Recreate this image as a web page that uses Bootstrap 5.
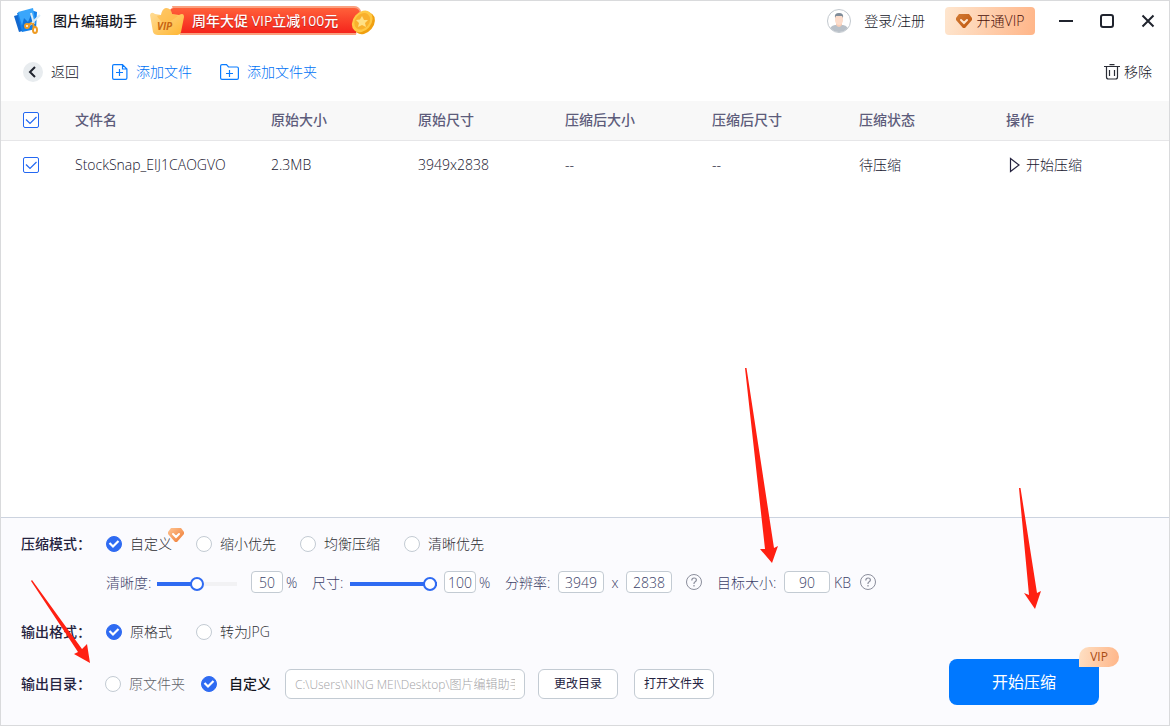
<!DOCTYPE html>
<html lang="zh-CN">
<head>
<meta charset="utf-8">
<meta name="viewport" content="width=device-width, initial-scale=1">
<title>图片编辑助手</title>
<link href="https://cdn.jsdelivr.net/npm/bootstrap@5.3.0/dist/css/bootstrap.min.css" rel="stylesheet">
<style>
  body { font: 300 14px/20px "Open Sans", "Noto Sans CJK SC", sans-serif; color: #14161f; }
  .app { min-height: 100vh; border: 1px solid #d9dadc; background: #fff; }
  .app svg { display: block; flex: none; }
  .app button, .app input { font-weight: inherit; }
  .plain { background: none; border: 0; padding: 0; color: inherit; display: flex; align-items: center; text-decoration: none; }
  .blue { color: #0072f5; }

  .titlebar { height: 40px; padding: 0 14px 0 12px; }
  .appname { font-weight: 500; margin: 0 13px 0 12px; }
  .promo { width: 225px; height: 30px; position: relative; }
  .promo span { position: absolute; left: 42px; top: 5px; color: #fff; font-weight: 500; text-shadow: 0 1px 1px #b8201a; white-space: nowrap; }
  .login { gap: 13px; margin-right: 20px; }
  .openvip { width: 90px; height: 28px; border-radius: 4px; background: linear-gradient(100deg, #fee6cf, #ffb588); color: #4b0f08; gap: 5px; justify-content: center; margin-right: 24px; }
  .wins { gap: 27px; }

  .toolbar { height: 60px; padding: 2px 17px 0 22px; }
  .backdot { width: 20px; height: 20px; border-radius: 50%; background: #e8ecef; margin-right: 8px; display: grid; place-items: center; }
  .tools { gap: 28px; margin-left: 33px; }

  .files { table-layout: fixed; width: 100%; }
  .files th { height: 39px; background: #f8f8f8; color: #5d5c7b; font-weight: 500; padding: 0; border-bottom: 1px solid #e6e6e8; }
  .files td { height: 49px; padding: 0; color: #16142e; }
  .files .form-check-input { display: block; width: 16px; height: 16px; margin: 0 0 0 22px; border: 1px solid #2468f2; border-radius: 2px; background-color: #fff; }
  .files .form-check-input:checked { background-size: 16px 16px; background-image: url("data:image/svg+xml,%3Csvg xmlns='http://www.w3.org/2000/svg' viewBox='0 0 16 16'%3E%3Cpath d='M3 7.5l4 4L13.500 5' fill='none' stroke='%232468f2' stroke-width='1.200'/%3E%3C/svg%3E"); }

  .panel { position: relative; border-top: 1px solid #ccd3df; background: #fbfbfe; padding: 14px 70px 20px 20px; }
  .rowhead { width: 85px; font-weight: 500; color: #25233f; white-space: nowrap; }
  .opts { height: 24px; gap: 24px; color: #2d2e33; }
  .pick { display: flex; align-items: center; gap: 8px; white-space: nowrap; position: relative; }
  .pick .form-check-input { width: 16px; height: 16px; margin: 0; border: 1px solid #c3cbd3; background-color: #fff; flex: none; }
  .pick .form-check-input:checked { border-color: #2f6bf2; background-color: #2f6bf2; background-size: 16px 16px; background-image: url("data:image/svg+xml,%3Csvg xmlns='http://www.w3.org/2000/svg' viewBox='0 0 16 16'%3E%3Cpath d='M3.500 7L7 10.500L12.500 5' fill='none' stroke='%23fff' stroke-width='2.200'/%3E%3C/svg%3E"); }
  .gem { position: absolute; right: -12px; top: -4px; }
  .faded { color: #606269; }
  .chosen { font-weight: 500; gap: 12px; }

  .tune { display: grid; grid-template-columns: 51px 94px 35px 26px 38px 94px 35px 26px 53px 46px 22px 60px 31px 67px 50px 26px 16px; align-items: center; margin: 15px 0 27px 85px; color: #3c3f68; white-space: nowrap; }
  .tune label, .tune span { padding-top: 2px; }
  .num { width: 32px; height: 22px; padding: 0; border: 1px solid #c3cbd3; border-radius: 4px; background: #fff; color: #3c3f68; text-align: center; }
  .num.wide { width: 46px; }
  .rng { appearance: none; -webkit-appearance: none; display: block; width: 80px; height: 14px; margin: 4px 0 0; background: linear-gradient(#2f6bf2, #2f6bf2) 0 50% / var(--fill) 4px no-repeat, linear-gradient(#f2f2f4, #f2f2f4) 0 50% / 100% 4px no-repeat; border-radius: 2px; }
  .rng.long { width: 87px; }
  .rng::-webkit-slider-thumb { -webkit-appearance: none; width: 14px; height: 14px; border-radius: 50%; border: 2px solid #2f6bf2; background: #fff; }

  .outdir { margin: 25px 0 6px; height: 30px; }
  .outdir .rowhead { width: 84px; }
  .boxed { height: 30px; border: 1px solid #c3cbd3; border-radius: 6px; background: #fff; font-size: 12px; }
  .pathbox { width: 240px; padding: 0 9px; color: #a3a3a6; margin: 0 13px 0 14px; }
  .app .dirbtn { width: 80px; padding: 0; color: #25233f; font-weight: 400; }
  .app .go { width: 150px; height: 46px; border: 0; border-radius: 8px; background: #0078ff; color: #fff; font-size: 16px; font-weight: 400; position: relative; }
  .viptag { position: absolute; right: -20px; top: -12px; width: 40px; height: 20px; border-radius: 10px 10px 10px 0; background: linear-gradient(100deg, #fee0c4, #ffb588); color: #a94c12; font-size: 12px; line-height: 20px; }
  .arrow { position: absolute; pointer-events: none; }
</style>
</head>
<body>
<div class="app d-flex flex-column">
  <header class="titlebar d-flex align-items-center">
    <svg width="28" height="28" viewBox="0 0 28 28">
      <path d="M1 9l7-2 5 16-7 2z" fill="#1268cf"/>
      <path d="M4 6l14-3 6 2-1 17-14 3z" fill="#1580ea"/>
      <path d="M5 5l15-4 3 17-13 4z" fill="#3aa6fb"/>
      <path d="M9 19l2-8 4 4 3-7 5 10-13 4z" fill="#1173d8"/>
      <path d="M18 6l3 11M27 8l-10 10" stroke="#dcecf6" stroke-width="2" fill="none"/>
      <path d="M19 16l-4 2M20 16l1 5" stroke="#ee9b24" stroke-width="2" fill="none"/>
      <circle cx="14" cy="19" r="2" fill="#fff" stroke="#ee9b24" stroke-width="2"/>
      <ellipse cx="22" cy="23" rx="2" ry="3" fill="#fff" stroke="#ee9b24" stroke-width="2"/>
    </svg>
    <span class="appname">图片编辑助手</span>
    <a class="promo" href="#">
      <svg width="225" height="30" viewBox="0 0 225 30">
        <defs>
          <linearGradient id="red" x2="0" y2="1"><stop stop-color="#ff6039"/><stop offset="1" stop-color="#f5241c"/></linearGradient>
          <linearGradient id="gold" x2="1" y2="1"><stop stop-color="#ffe0a0"/><stop offset="1" stop-color="#ffb52f"/></linearGradient>
          <linearGradient id="gemfill" x2="1" y2="1"><stop stop-color="#d27b35"/><stop offset="1" stop-color="#c0560f"/></linearGradient>
          <linearGradient id="gemlight" x2="1" y2="1"><stop stop-color="#ffc593"/><stop offset="1" stop-color="#ee7830"/></linearGradient>
        </defs>
        <path d="M22 0H204Q209 0 211 5L206 29H30z" fill="#f9a07f"/>
        <path d="M20 5Q20 2 24 2H204Q209 2 210 7L206 27H30z" fill="url(#red)"/>
        <path d="M0 9Q1 5 5 8L11 9Q12 3 16 2Q21 2 22 8L29 9Q34 6 34 11L31 26Q30 29 27 29H8Q4 29 3 26z" fill="url(#gold)"/>
        <path d="M11 9Q12 3 16 2Q21 2 22 8L28 10Q20 16 15 18Q9 14 7 10z" fill="#ffb43b" opacity=".5"/>
        <text x="7" y="24" font-size="10" font-weight="700" font-style="italic" fill="#c86410">VIP</text>
        <g transform="rotate(-50 213 16)">
          <ellipse cx="213" cy="18" rx="12" ry="9" fill="#f0a010"/>
          <ellipse cx="213" cy="15" rx="12" ry="9" fill="#ffc844"/>
          <ellipse cx="213" cy="15" rx="9" ry="7" fill="#f9b02c"/>
        </g>
        <path d="M212 10l2 4 4 0-3 3 1 4-4-2-4 2 1-4-3-3 4-.5z" fill="#ffe085"/>
      </svg>
      <span>周年大促 VIP立减100元</span>
    </a>
    <button class="plain login ms-auto">
      <svg width="24" height="24" viewBox="0 0 24 24">
        <defs><clipPath id="face"><circle cx="12" cy="12" r="11"/></clipPath></defs>
        <circle cx="12" cy="12" r="11.500" fill="#fff" stroke="#c2c8ce"/>
        <g clip-path="url(#face)">
          <path d="M2 24q0-7 6-8h8q6 1 6 8z" fill="#b9c0c8"/>
          <path d="M9 13h6v3q-3 4-6 0z" fill="#f7cdb6"/>
          <path d="M8 7h8v5q-1 4-4 4t-4-4z" fill="#fcdccb"/>
          <path d="M8 9q-1-5 4-5t4 5l-1-2H9z" fill="#7f8c99"/>
        </g>
      </svg>
      <span>登录/注册</span>
    </button>
    <button class="plain openvip">
      <svg width="16" height="14" viewBox="0 0 16 14"><path d="M3 0h10l3 4v2l-7 8H7L0 6V4z" fill="url(#gemfill)"/><path d="M5 6l3 3 3-3" fill="none" stroke="#fee6cf" stroke-width="2" stroke-linecap="round"/></svg>
      <span>开通VIP</span>
    </button>
    <div class="wins d-flex align-items-center">
      <button class="plain" aria-label="最小化"><svg width="14" height="14"><path d="M0 7h14" stroke="#20242e" stroke-width="2"/></svg></button>
      <button class="plain" aria-label="最大化"><svg width="14" height="14"><rect x="1" y="1" width="12" height="12" rx="2" fill="none" stroke="#20242e" stroke-width="2"/></svg></button>
      <button class="plain" aria-label="关闭"><svg width="14" height="14"><path d="M1.500 1.500l11 11M12.500 1.500l-11 11" stroke="#20242e" stroke-width="2"/></svg></button>
    </div>
  </header>

  <nav class="toolbar d-flex align-items-center">
    <button class="plain"><span class="backdot"><svg width="10" height="12"><path d="M7 1L2 6l5 5" fill="none" stroke="#20242e" stroke-width="2"/></svg></span>返回</button>
    <div class="tools d-flex">
      <button class="plain blue gap-2">
        <svg width="16" height="16" fill="none" stroke="#0a7cff" stroke-width="1.200"><path d="M10.500.6H2Q.6.600.6 2v12q0 1.400 1.400 1.400h11.500q1.400 0 1.400-1.400V5zM10.500.6v4.400h4.400M4 8.500h7M7.500 5v7"/></svg>
        添加文件
      </button>
      <button class="plain blue gap-2">
        <svg width="19" height="16" fill="none" stroke="#0a7cff" stroke-width="1.200"><path d="M.6 14V2Q.6.600 2 .6h4.500L8.500 3H17q1.400 0 1.400 1.400V14q0 1.400-1.400 1.400H2Q.6 15.400.6 14zM6 9.500h7M9.500 6v7"/></svg>
        添加文件夹
      </button>
    </div>
    <button class="plain gap-1 ms-auto">
      <svg width="16" height="16" fill="none" stroke="#2a2d36" stroke-width="1.200"><path d="M0 2.500h16M5.500.6h5M2.500 2.500V13q0 2 2 2h7q2 0 2-2V2.500M5.500 6v6M10.500 6v6"/></svg>
      移除
    </button>
  </nav>

  <main class="flex-grow-1">
    <table class="files">
      <colgroup><col style="width:74px"><col style="width:196px"><col style="width:147px"><col style="width:147px"><col style="width:147px"><col style="width:147px"><col style="width:147px"><col style="width:163px"></colgroup>
      <thead>
        <tr><th><input class="form-check-input" type="checkbox" checked aria-label="全选"></th><th>文件名</th><th>原始大小</th><th>原始尺寸</th><th>压缩后大小</th><th>压缩后尺寸</th><th>压缩状态</th><th>操作</th></tr>
      </thead>
      <tbody>
        <tr><td><input class="form-check-input" type="checkbox" checked aria-label="选择文件"></td><td>StockSnap_EIJ1CAOGVO</td><td>2.3MB</td><td>3949x2838</td><td>--</td><td>--</td><td>待压缩</td>
          <td><button class="plain gap-1"><svg width="16" height="16"><path d="M4.500 1.500v13l8.500-6.500z" fill="none" stroke="#25233f" stroke-width="1.200"/></svg>开始压缩</button></td></tr>
      </tbody>
    </table>
  </main>

  <section class="panel d-flex justify-content-between align-items-end">
    <form>
      <div class="d-flex align-items-center">
        <span class="rowhead">压缩模式：</span>
        <div class="opts d-flex">
          <label class="pick"><input class="form-check-input" type="radio" name="mode" checked>自定义
            <svg class="gem" width="16" height="14" viewBox="0 0 16 14"><path d="M3 0h10l3 4v2l-7 8H7L0 6V4z" fill="url(#gemlight)"/><path d="M5 6l3 3 3-3" fill="none" stroke="#fff" stroke-width="2" stroke-linecap="round"/></svg></label>
          <label class="pick"><input class="form-check-input" type="radio" name="mode">缩小优先</label>
          <label class="pick"><input class="form-check-input" type="radio" name="mode">均衡压缩</label>
          <label class="pick"><input class="form-check-input" type="radio" name="mode">清晰优先</label>
        </div>
      </div>
      <div class="tune">
        <label for="q">清晰度:</label>
        <input id="q" class="rng" type="range" value="50" style="--fill:50%">
        <input class="num" value="50" aria-label="清晰度"><span>%</span>
        <label for="s">尺寸:</label>
        <input id="s" class="rng long" type="range" value="100" style="--fill:100%">
        <input class="num" value="100" aria-label="尺寸"><span>%</span>
        <label for="w">分辨率:</label>
        <input id="w" class="num wide" value="3949"><span class="text-center">x</span>
        <input class="num wide" value="2838" aria-label="高度">
        <svg width="16" height="16" fill="none" stroke="#8b8e9c"><circle cx="8" cy="8" r="7.500"/><path d="M5.800 6.500q0-2.500 2.300-2.500t2.300 2q0 1-1.200 1.700T8 9.500v.5M8 11v1.500" stroke-width="1.200"/></svg>
        <label for="t">目标大小:</label>
        <input id="t" class="num wide" value="90"><span>KB</span>
        <svg width="16" height="16" fill="none" stroke="#8b8e9c"><circle cx="8" cy="8" r="7.500"/><path d="M5.800 6.500q0-2.500 2.300-2.500t2.300 2q0 1-1.200 1.700T8 9.500v.5M8 11v1.500" stroke-width="1.200"/></svg>
      </div>
      <div class="d-flex align-items-center">
        <span class="rowhead">输出格式：</span>
        <div class="opts d-flex">
          <label class="pick"><input class="form-check-input" type="radio" name="fmt" checked>原格式</label>
          <label class="pick"><input class="form-check-input" type="radio" name="fmt">转为JPG</label>
        </div>
      </div>
      <div class="outdir d-flex align-items-center">
        <span class="rowhead">输出目录：</span>
        <label class="pick faded me-3"><input class="form-check-input" type="radio" name="dir">原文件夹</label>
        <label class="pick chosen"><input class="form-check-input" type="radio" name="dir" checked>自定义</label>
        <input class="boxed pathbox" value="C:\Users\NING MEI\Desktop\图片编辑助手" aria-label="输出目录">
        <button type="button" class="boxed dirbtn me-3">更改目录</button>
        <button type="button" class="boxed dirbtn">打开文件夹</button>
      </div>
    </form>
    <button class="go">开始压缩<span class="viptag">VIP</span></button>

    <svg class="arrow" style="left:30px;top:62px" width="60" height="84"><path d="M0 1L1 0L51 69L56 64L59 83L43 74L47 72z" fill="#ff2012"/></svg>
    <svg class="arrow" style="left:744px;top:-150px" width="36" height="196"><path d="M0 0h1.500L29 180L33 178L27 195L15 181L20 181z" fill="#ff2012"/></svg>
    <svg class="arrow" style="left:1018px;top:-30px" width="26" height="122"><path d="M0 0h1.500L18 105L22 103L16 121L5 105L10 107z" fill="#ff2012"/></svg>
  </section>
</div>
<script src="https://cdn.jsdelivr.net/npm/bootstrap@5.3.0/dist/js/bootstrap.bundle.min.js"></script>
</body>
</html>
